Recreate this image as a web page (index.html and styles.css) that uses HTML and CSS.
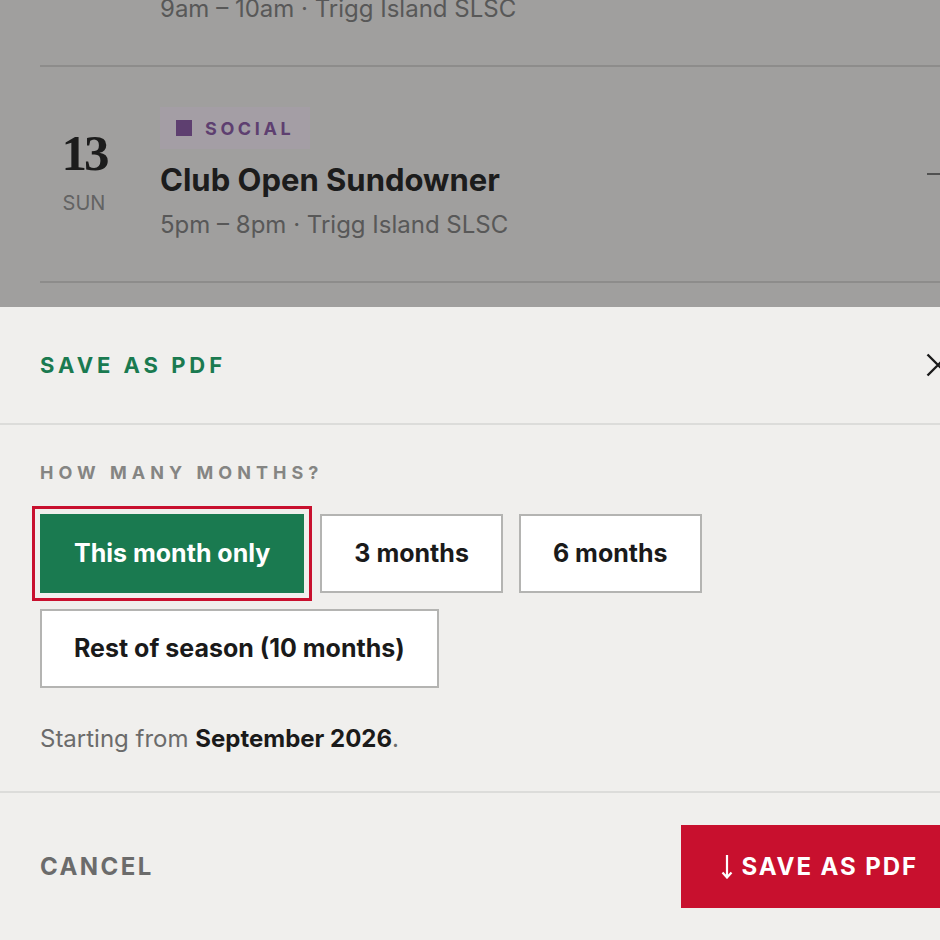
FILE: index.html
```html
<!DOCTYPE html>
<html lang="en">
<head>
<meta charset="utf-8">
<title>Save as PDF</title>
<link rel="stylesheet" href="styles.css">
</head>
<body>
<div class="page">
  <ul class="events">
    <li class="event event-cut">
      <div class="event-date"></div>
      <div class="event-info">
        <p class="event-meta">9am – 10am · Trigg Island SLSC</p>
      </div>
    </li>
    <li class="event">
      <div class="event-date">
        <span class="day-num">13</span>
        <span class="day-name">SUN</span>
      </div>
      <div class="event-info">
        <span class="tag tag-social"><span class="tag-swatch"></span>SOCIAL</span>
        <h3 class="event-title">Club Open Sundowner</h3>
        <p class="event-meta">5pm – 8pm · Trigg Island SLSC</p>
      </div>
      <svg class="event-arrow" width="24" height="24" viewBox="0 0 24 24" aria-hidden="true"><path d="M1 12H22M15 5L22 12L15 19" fill="none" stroke="currentColor" stroke-width="2.2"/></svg>
    </li>
  </ul>
</div>

<div class="scrim"></div>

<section class="sheet" role="dialog" aria-label="Save as PDF">
  <header class="sheet-header">
    <h2 class="sheet-title">SAVE AS PDF</h2>
    <button class="close-btn" aria-label="Close">
      <svg width="24" height="24" viewBox="0 0 24 24"><path d="M1.5 1.5L22.5 22.5M22.5 1.5L1.5 22.5" fill="none" stroke="currentColor" stroke-width="2.4"/></svg>
    </button>
  </header>
  <div class="sheet-body">
    <p class="field-label">HOW MANY MONTHS?</p>
    <div class="options">
      <button class="option is-selected">This month only</button>
      <button class="option">3 months</button>
      <button class="option">6 months</button>
      <button class="option">Rest of season (10 months)</button>
    </div>
    <p class="start-note">Starting from <strong>September 2026</strong>.</p>
  </div>
  <footer class="sheet-footer">
    <button class="cancel-btn">CANCEL</button>
    <button class="save-btn">
      <svg width="12" height="24" viewBox="0 0 12 24" aria-hidden="true"><path d="M6 0V22.5M1.5 17.5L6 22.5L10.5 17.5" fill="none" stroke="currentColor" stroke-width="2.2"/></svg>
      <span>SAVE AS PDF</span>
    </button>
  </footer>
</section>
</body>
</html>
```

FILE: styles.css
```css
* { box-sizing: border-box; }

html, body {
  margin: 0;
  padding: 0;
  height: 100%;
  overflow: hidden;
}

body {
  background: #f0efed;
  font-family: "Inter", "Liberation Sans", sans-serif;
  color: #1a1a1a;
}

.page {
  width: 990px;
  padding: 0 40px;
}

.events {
  list-style: none;
  margin: -7px 0 0;
  padding: 0;
}

.event {
  display: flex;
  align-items: center;
  gap: 32px;
  padding: 40px 0;
  border-bottom: 2px solid #d4d3d1;
}

.event-cut {
  padding-top: 0;
}

.event-date {
  width: 88px;
  flex: none;
  display: flex;
  flex-direction: column;
  align-items: center;
}

.day-num {
  font-family: "Liberation Serif", serif;
  font-weight: 700;
  font-size: 51px;
  line-height: 52px;
  letter-spacing: -3px;
  color: #2a2a2a;
  margin-top: -4px;
}

.day-name {
  font-size: 20px;
  line-height: 28px;
  margin-top: 10px;
  color: #959595;
}

.event-info {
  flex: 1;
  display: flex;
  flex-direction: column;
  align-items: flex-start;
}

.tag {
  display: inline-flex;
  align-items: center;
  gap: 13px;
  height: 42px;
  padding: 0 16px 0 16px;
  font-size: 18px;
  font-weight: 700;
  letter-spacing: 0.2em;
}

.tag-social {
  background: #f6eef8;
  color: #8d5fa8;
}

.tag-swatch {
  width: 16px;
  height: 16px;
  background: currentColor;
}

.event-title {
  margin: 12px 0 0;
  font-size: 31px;
  line-height: 38px;
  font-weight: 700;
  color: #2a2a2a;
}

.event-meta {
  margin: 10px 0 0;
  font-size: 24px;
  line-height: 32px;
  color: #858585;
}

.event-cut .event-meta {
  margin-top: 0;
}

.event-arrow {
  flex: none;
  color: #7a7a7a;
}

.scrim {
  position: fixed;
  inset: 0;
  background: rgba(0, 0, 0, 0.333);
}

.sheet {
  position: fixed;
  left: 0;
  bottom: 0;
  width: 990px;
  background: #f0efed;
}

.sheet-header {
  height: 118px;
  padding: 0 40px;
  display: flex;
  align-items: center;
  justify-content: space-between;
  border-bottom: 2px solid #dcdcda;
}

.sheet-title {
  margin: 0;
  font-size: 22px;
  line-height: 28px;
  font-weight: 700;
  letter-spacing: 0.18em;
  color: #1a7a50;
}

.close-btn {
  display: flex;
  padding: 0;
  border: 0;
  background: none;
  color: #1a1a1a;
}

.sheet-body {
  padding: 36px 40px;
  border-bottom: 2px solid #dcdcda;
}

.field-label {
  margin: 0 0 29px;
  font-size: 18px;
  line-height: 24px;
  font-weight: 700;
  letter-spacing: 0.28em;
  color: #858583;
}

.options {
  display: flex;
  flex-wrap: wrap;
  gap: 16px;
  max-width: 700px;
}

.option {
  font-family: inherit;
  font-size: 25px;
  line-height: 27px;
  font-weight: 700;
  padding: 24px 32px;
  background: #ffffff;
  color: #1a1a1a;
  border: 2px solid #b4b4b2;
  border-radius: 0;
}

.option.is-selected {
  background: #1a7a50;
  border-color: #1a7a50;
  color: #ffffff;
  outline: 3px solid #c8102e;
  outline-offset: 5px;
}

.start-note {
  margin: 35px 0 0;
  font-size: 24px;
  line-height: 32px;
  color: #6b6b6b;
}

.start-note strong {
  color: #1a1a1a;
  font-weight: 700;
}

.sheet-footer {
  padding: 32px 40px;
  display: flex;
  align-items: center;
  justify-content: space-between;
}

.cancel-btn {
  padding: 0;
  border: 0;
  background: none;
  font-family: inherit;
  font-size: 24px;
  line-height: 32px;
  font-weight: 700;
  letter-spacing: 0.1em;
  color: #6b6b6b;
}

.save-btn {
  height: 83px;
  display: flex;
  align-items: center;
  gap: 8px;
  padding: 0 32px 0 40px;
  border: 0;
  border-radius: 0;
  background: #c8102e;
  color: #ffffff;
  font-family: inherit;
  font-size: 24px;
  line-height: 32px;
  font-weight: 700;
  letter-spacing: 0.08em;
}
```
